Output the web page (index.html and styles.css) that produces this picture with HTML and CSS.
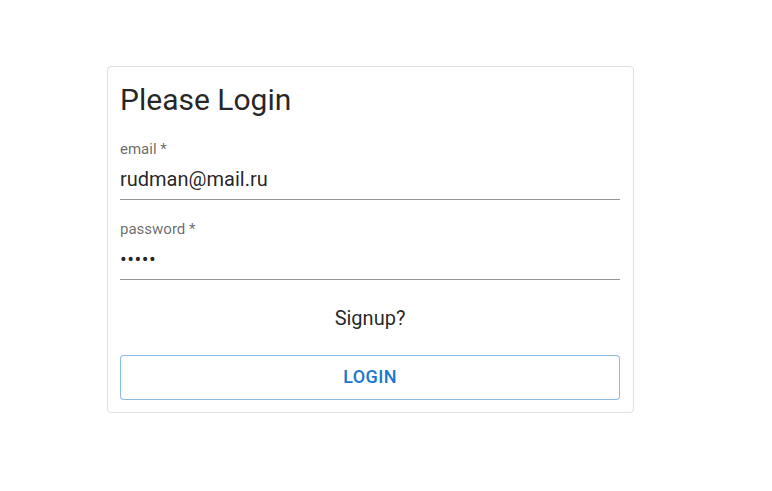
FILE: index.html
```html
<!DOCTYPE html>
<html>
<head>
<meta charset="utf-8">
<link rel="stylesheet" href="styles.css">
</head>
<body>
<div class="page">
  <form class="card">
    <h1 class="title">Please Login</h1>
    <div class="field">
      <label class="label">email *</label>
      <div class="value">rudman@mail.ru</div>
    </div>
    <div class="field">
      <label class="label">password *</label>
      <div class="value dots">•••••</div>
    </div>
    <div class="signup">Signup?</div>
    <button type="button" class="btn">LOGIN</button>
  </form>
</div>
</body>
</html>
```

FILE: styles.css
```css
html, body { margin: 0; padding: 0; background: #fff; }
body { font-family: Roboto, "Noto Sans", sans-serif; color: rgba(0,0,0,0.87); }
.page { padding: 66px 0 0 107px; }
.card {
  box-sizing: border-box;
  width: 527px;
  border: 1px solid #e0e0e0;
  border-radius: 4px;
  padding: 13px 13px 12px 12px;
  display: flex;
  flex-direction: column;
}
.title { margin: 0; font-size: 30px; font-weight: 400; line-height: 40px; }
.field { margin-top: 20px; border-bottom: 1px solid rgba(0,0,0,0.42); display: flex; flex-direction: column; }
.field + .field { margin-top: 20px; }
.label { font-size: 15px; line-height: 18px; color: rgba(0,0,0,0.6); }
.value { font-size: 20px; line-height: 24px; padding: 9px 0 8px; }
.dots { letter-spacing: 0.5px; }
.signup { text-align: center; font-size: 20px; line-height: 24px; margin-top: 26px; }
.btn {
  margin-top: 25px;
  height: 45px;
  padding: 0 0 2px;
  background: #fff;
  border: 1px solid rgba(25,118,210,0.5);
  border-radius: 4px;
  color: #1976d2;
  font-family: Roboto, sans-serif;
  font-size: 18px;
  font-weight: 500;
  letter-spacing: 0.4px;
}
```
